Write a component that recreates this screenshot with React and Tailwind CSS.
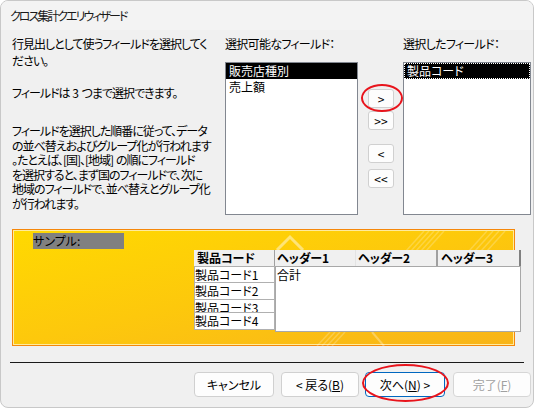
import React from "react";

const MoveButton = ({ label, className = "" }) => (
  <div
    className={`w-[26px] h-[19px] flex items-center justify-center rounded-[3px] border border-[#d0d0d0] bg-[#fdfdfd] text-[12px] leading-none ${className}`}
  >
    {label}
  </div>
);

const DialogButton = ({ children, className = "" }) => (
  <div
    className={`h-[25px] flex items-center justify-center rounded-[4px] border bg-[#fdfdfd] text-[12px] ${className}`}
  >
    {children}
  </div>
);

export default function App() {
  return (
    <div className="relative w-[534px] h-[408px] overflow-hidden rounded-[8px] border border-[#c8c8c8] bg-[#f0f0f0] text-[12px] text-black font-['Noto_Sans_CJK_JP','Noto_Sans',sans-serif] [font-feature-settings:'palt']">
      {/* Title bar */}
      <div className="h-[29px] flex items-center pl-[9px] bg-[#f3f3f3] text-[#1a1a1a] tracking-[-2px]">
        クロス集計クエリ<span className="tracking-normal"> </span>ウィザード
      </div>

      {/* Field pickers */}
      <div className="flex h-[199px]">
        <div className="ml-[11px] w-[203px] pt-[5px] whitespace-nowrap tracking-[-1px]">
          <div className="leading-[17px]">
            行見出しとして使うフィールドを選択してく
            <br />
            ださい。
          </div>
          <div className="mt-[15px] leading-[17px]">
            フィールドは<span className="tracking-normal"> 3 </span>つまで選択できます。
          </div>
          <div className="mt-[23px] leading-[14.6px]">
            フィールドを選択した順番に従って、データ
            <br />
            の並べ替えおよびグループ化が行われます
            <br />
            。たとえば、[国]、[地域]<span className="tracking-normal"> </span>の順にフィールド
            <br />
            を選択すると、まず国のフィールドで、次に
            <br />
            地域のフィールドで、並べ替えとグループ化
            <br />
            が行われます。
          </div>
        </div>

        <div className="ml-[10px] w-[133px] pt-[5px]">
          <div className="leading-[17px] whitespace-nowrap tracking-[-0.7px]">選択可能なフィールド：</div>
          <div className="mt-[10px] h-[153px] border border-[#828790] bg-white">
            <div className="h-[16px] leading-[16px] bg-black text-white pl-[3px]">販売店種別</div>
            <div className="h-[16px] leading-[16px] pl-[3px]">売上額</div>
          </div>
        </div>

        <div className="w-[45px] pl-[10px] pt-[59px]">
          <MoveButton label=">" />
          <MoveButton label=">>" className="mt-[3px]" />
          <MoveButton label="<" className="mt-[14px]" />
          <MoveButton label="<<" className="mt-[6px]" />
        </div>

        <div className="w-[128px] pt-[5px]">
          <div className="leading-[17px] whitespace-nowrap tracking-[-0.7px]">選択したフィールド：</div>
          <div className="mt-[10px] h-[153px] border border-[#828790] bg-white">
            <div className="h-[16px] leading-[14px] bg-black text-white pl-[2px] border border-dotted border-white">
              製品コード
            </div>
          </div>
        </div>
      </div>

      {/* Sample preview */}
      <div className="ml-[11px] w-[503px] h-[117px] border border-[#f5870a]">
        <div className="relative h-full border border-[#ffeb9c] bg-linear-to-br from-[#ffd900] via-[#fdc80c] to-[#f8b418]">
          <svg className="absolute inset-0" width="501" height="115" viewBox="0 0 501 115">
            <polyline points="263,19 276,6 289,19" fill="none" stroke="#ffffff" strokeOpacity="0.45" strokeWidth="3" />
            <g stroke="#ffffff" strokeOpacity="0.22" strokeWidth="1.5">
              <line x1="392" y1="20" x2="410" y2="0" />
              <line x1="397" y1="20" x2="415" y2="0" />
              <line x1="402" y1="20" x2="420" y2="0" />
              <line x1="407" y1="20" x2="425" y2="0" />
              <line x1="412" y1="20" x2="430" y2="0" />
              <line x1="455" y1="20" x2="473" y2="0" />
              <line x1="461" y1="20" x2="479" y2="0" />
              <line x1="467" y1="20" x2="485" y2="0" />
              <line x1="473" y1="20" x2="491" y2="0" />
              <line x1="303" y1="115" x2="316" y2="101" />
              <line x1="308" y1="115" x2="321" y2="101" />
              <line x1="313" y1="115" x2="326" y2="101" />
              <line x1="318" y1="115" x2="331" y2="101" />
            </g>
            <line x1="358" y1="101" x2="370" y2="115" stroke="#ffffff" strokeOpacity="0.3" strokeWidth="2" />
          </svg>

          <div className="relative flex flex-col items-start">
            <div className="mt-[2px] ml-[19px] w-[91px] h-[16px] leading-[16px] bg-[#808080]">サンプル:</div>

            <div className="mt-[1px] ml-[180px]">
              <div className="flex h-[16px] leading-[16px] font-bold bg-[#f0f0f0]">
                <div className="w-[81px] pl-[3px] border-r border-[#a0a0a0]">製品コード</div>
                <div className="w-[81px] pl-[2px] border-r border-[#e3e3e3]">ヘッダー1</div>
                <div className="w-[82px] pl-[2px] border-r-2 border-[#a0a0a0]">ヘッダー2</div>
                <div className="w-[83px] pl-[3px] border-r-2 border-[#808080]">ヘッダー3</div>
              </div>
              <div className="flex">
                <div className="w-[81px] flex flex-col">
                  <div className="h-[17px] leading-[16px] bg-white border border-[#b0b0b0]">製品コード1</div>
                  <div className="h-[17px] leading-[16px] bg-white border border-t-0 border-[#b0b0b0]">製品コード2</div>
                  <div className="h-[13px] leading-[16px] bg-white border border-t-0 border-[#b0b0b0] overflow-hidden">製品コード3</div>
                  <div className="h-[17px] leading-[16px] bg-white border border-t-0 border-[#b0b0b0]">製品コード4</div>
                </div>
                <div className="w-[246px] h-[66px] bg-white border border-[#a8a8a8] pl-[1px] leading-[16px]">合計</div>
              </div>
            </div>
          </div>
        </div>
      </div>

      {/* Footer */}
      <div className="mt-[16px] ml-[9px] w-[514px] h-px bg-[#1a1a1a]" />
      <div className="mt-[9px] flex">
        <DialogButton className="ml-[193px] w-[80px] border-[#d0d0d0]">キャンセル</DialogButton>
        <DialogButton className="ml-[7px] w-[78px] border-[#d0d0d0]">
          &lt; 戻る(<span className="underline">B</span>)
        </DialogButton>
        <DialogButton className="ml-[6px] w-[80px] border-[#0067c0]">
          次へ(<span className="underline">N</span>) &gt;
        </DialogButton>
        <DialogButton className="ml-[8px] w-[78px] border-[#d6d6d6] text-[#a0a0a0]">
          完了(<span className="underline">F</span>)
        </DialogButton>
      </div>

      {/* Annotation ellipses */}
      <div className="absolute left-[360px] top-[83px] w-[42px] h-[28px] rounded-[50%] border-2 border-[#e8141c]" />
      <div className="absolute left-[361px] top-[363px] w-[87px] h-[38px] rounded-[50%] border-2 border-[#e8141c]" />
    </div>
  );
}
